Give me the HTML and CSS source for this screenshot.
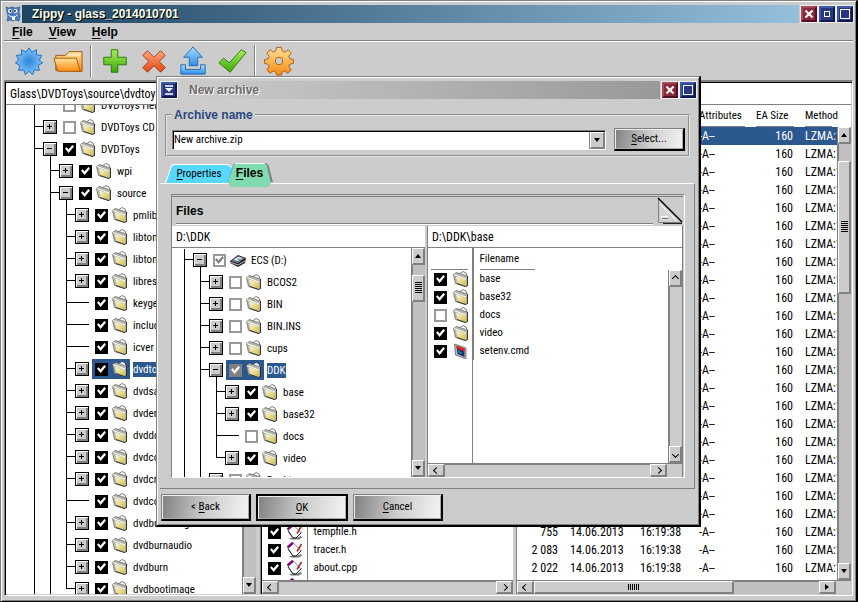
FILE: index.html
```html
<!DOCTYPE html>
<html lang="en">
  <head>
    <meta charset="UTF-8">
    <title>Zippy - glass_2014010701</title>
    <link rel="stylesheet" href="styles.css">
  </head>
  <body>

    <svg class="defs" aria-hidden="true">
      <defs>
        <linearGradient id="g-gold" x1="0" y1="0" x2="1" y2="1">
          <stop offset="0" stop-color="#fdfbe0"/>
          <stop offset="1" stop-color="#d0bc40"/>
        </linearGradient>
        <linearGradient id="g-orange" x1="0" y1="0" x2="0" y2="1">
          <stop offset="0" stop-color="#ffe09a"/>
          <stop offset="1" stop-color="#fb8a10"/>
        </linearGradient>
        <linearGradient id="g-green" x1="0" y1="0" x2="0" y2="1">
          <stop offset="0" stop-color="#a8ee58"/>
          <stop offset="1" stop-color="#3aa808"/>
        </linearGradient>
        <linearGradient id="g-red" x1="0" y1="0" x2="0" y2="1">
          <stop offset="0" stop-color="#ffa878"/>
          <stop offset="1" stop-color="#e64410"/>
        </linearGradient>
        <linearGradient id="g-blue" x1="0" y1="0" x2="0" y2="1">
          <stop offset="0" stop-color="#a8dcff"/>
          <stop offset="1" stop-color="#2f8ee8"/>
        </linearGradient>
        <radialGradient id="g-star">
          <stop offset="0" stop-color="#2f86dc"/>
          <stop offset="1" stop-color="#7cc4fc"/>
        </radialGradient>
      </defs>
      <symbol id="folder" viewBox="0 0 16 16">
        <path d="M5 3.500 8 2l2-1.500L13 2l1 3v3z" fill="#fff" stroke="#444" stroke-width=".7"/>
        <path d="M.5 3.500 3.500 1.500 14.500 5v9.500l-2 1L2.500 12.500z" fill="#b4b4a8" stroke="#666" stroke-width=".7"/>
        <path d="M3 5.500l10 3v6.500L4.500 12z" fill="url(#g-gold)"/>
        <path d="M1 3.500l12 4.500" fill="none" stroke="#fff"/>
        <path d="M14.500 5v9.500l-2 1-8.500-3" fill="none" stroke="#222" stroke-width=".8"/>
      </symbol>
      <symbol id="drive" viewBox="0 0 16 16">
        <path d="M0 9 8 3l8 3-1 5-7 4-8-4z" fill="#24242c"/>
        <path d="M1 9l7-5 7 2-7 5z" fill="#77778c"/>
        <path d="M4 7.500 8 5l4 1-4 3z" fill="#fff"/>
        <path d="M7 6l4 1-3 2z" fill="#3ab6b0"/>
        <path d="M0 10l8 3 7-4" fill="none" stroke="#b8b8c0"/>
      </symbol>
      <symbol id="cmd" viewBox="0 0 16 16">
        <path d="M1.500 1 13 5v11L2.500 12z" fill="#bbb" stroke="#666" stroke-width=".8"/>
        <path d="M3.500 3l8 3v8L4.500 11z" fill="#183078"/>
        <path d="M3.500 2.500 11.500 5.500v3L3.500 5.500z" fill="#e02020"/>
        <path d="M6 7v3M8 9v2" stroke="#20b0a0" fill="none"/>
      </symbol>
      <symbol id="source-file" viewBox="0 0 16 16">
        <path d="M2 14h7l5-2 1 1.500-3 2H4z" fill="#777"/>
        <path d="M1 6 6.500 1 14 9l-5 5H6z" fill="#fff" stroke="#555" stroke-width=".7"/>
        <path d="M.5 5.500 6 .8" stroke="#800080" stroke-width="2.500"/>
        <path d="M10 9.500 14.500 2" stroke="#a02828" stroke-width="1.500"/>
        <path d="M1 7l5 7h3l5.500-5.500" fill="none" stroke="#222"/>
      </symbol>
    </svg>

    <div class="app">
      <header class="titlebar">
        <svg class="app-icon" viewBox="0 0 16 16">
          <path d="M1 1l3 1 3-1 3 1 5-1-1 5 1 4-1 5-4-1-2 1-3-1-3 1 1-5-1-4z" fill="#4c7cc0" stroke="#2a4c88" stroke-width=".6"/>
          <circle cx="5" cy="5" r="2" fill="#fff"/><circle cx="10.500" cy="5" r="2" fill="#fff"/>
          <circle cx="5.500" cy="5" r="1" fill="#123"/><circle cx="10" cy="5" r="1" fill="#123"/>
          <path d="M3.500 9q4.500 4 9 0" fill="none" stroke="#fff"/>
          <path d="M7 11h3v3H7z" fill="#fff"/>
        </svg>
        <h1 class="title">Zippy - glass_2014010701</h1>
        <button class="win-btn close" aria-label="Close"></button>
        <button class="win-btn min" aria-label="Minimize"></button>
        <button class="win-btn max" aria-label="Maximize"></button>
      </header>

      <nav class="menu">
        <button><u>F</u>ile</button>
        <button><u>V</u>iew</button>
        <button><u>H</u>elp</button>
      </nav>

      <div class="toolbar">
        <button aria-label="New">
          <svg viewBox="0 0 32 32"><path d="M16 2l3 4.500 5-2.500 0 5.500 5.500.5-2.500 5 3.500 3-4.500 2.500 1 5.500-5.500-.5-1.500 5-4-3.500-4 3.500-1.500-5-5.500.5 1-5.500-4.500-2.500 3.500-3-2.500-5 5.500-.5 0-5.500 5 2.500z" fill="url(#g-star)" stroke="#1f6ab8"/></svg>
        </button>
        <button aria-label="Open">
          <svg viewBox="0 0 32 32"><path d="M3 26V10h10l4-4h14v21z" fill="url(#g-orange)" stroke="#9c5410"/><path d="M17 8h12v3H15z" fill="#ffe4b0"/><path d="M1 13h24l4 14H5z" fill="url(#g-orange)" stroke="#a85c10"/></svg>
        </button>
        <span class="sep"></span>
        <button aria-label="Add">
          <svg viewBox="0 0 32 32"><path d="M12 4h7v8h9v8h-9v8h-7v-8H4v-8h8z" fill="url(#g-green)" stroke="#28780c" stroke-linejoin="round"/></svg>
        </button>
        <button aria-label="Delete">
          <svg viewBox="0 0 32 32"><path d="M9 5l7 7 7-7 5 5-6.500 6.500L28 23l-5 5-7-7-7 7-5-5 6.500-6.500L4 10z" fill="url(#g-red)" stroke="#a03c18" stroke-linejoin="round"/></svg>
        </button>
        <button aria-label="Extract">
          <svg viewBox="0 0 32 32"><path d="M3 20h5v5h16v-5h5v10H3z" fill="url(#g-blue)" stroke="#2468b0"/><path d="M16 1l10 11h-5v9H12v-9H6z" fill="url(#g-blue)" stroke="#2468b0"/></svg>
        </button>
        <button aria-label="Test">
          <svg viewBox="0 0 32 32"><path d="M2 18l5-5 6 5L26 4l5 3-17 21z" fill="url(#g-green)" stroke="#28780c" stroke-linejoin="round"/></svg>
        </button>
        <span class="sep"></span>
        <button aria-label="Settings">
          <svg viewBox="0 0 32 32"><path d="M13.500 1.500h5l1 4 2.500 1 4-2.500 3 3.500-2.500 3.500 1 2.500 4 1v4l-4 1-1 2.500 2.500 3.500-3.500 3.500-3.500-2.500-2.500 1-1 3.500h-5l-1-3.500-2.500-1-3.500 2.500-3.500-3.500L5.500 22l-1-2.500L.5 18.500v-4l4-1 1-2.500L3 7.500 6.500 4l3.500 2.500 2.500-1zM16 12a4 4 0 1 0 0 8 4 4 0 1 0 0-8z" fill="url(#g-orange)" fill-rule="evenodd" stroke="#a85c10"/></svg>
        </button>
      </div>

      <main class="client">
        <div class="path">Glass\DVDToys\source\dvdtoys</div>
        <div class="panes">
          <section class="pane tree-pane">
            <div class="tree" id="main-tree"></div>
            <div class="sb sb-v"><span class="track"></span><button class="down" aria-label="Down"></button></div>
          </section>
          <section class="pane names-pane">
            <div class="names-body">
              <table class="files names">
                <thead><tr><th class="col-pick"></th><th>Filename</th></tr></thead>
                <tbody id="main-names"></tbody>
              </table>
            </div>
            <div class="sb sb-h"><button class="left off" aria-label="Left"></button><span class="track empty"></span><button class="right off" aria-label="Right"></button></div>
          </section>
          <section class="pane details-pane">
            <div class="details-body">
              <table class="files details">
                <colgroup><col class="w-size"><col class="w-date"><col class="w-time"><col class="w-attr"><col class="w-ea"><col></colgroup>
                <thead>
                  <tr><th><span>Size</span></th><th><span>Date</span></th><th><span>Time</span></th><th><span>Attributes</span></th><th><span>EA Size</span></th><th><span>Method</span></th></tr>
                </thead>
                <tbody id="main-details"></tbody>
              </table>
              <div class="sb sb-v under-header">
                <button class="up" aria-label="Up"></button>
                <span class="track gap"></span>
                <span class="thumb"><i class="grip"></i></span>
                <span class="track"></span>
                <button class="down" aria-label="Down"></button>
              </div>
            </div>
            <div class="sb sb-h">
              <button class="left off" aria-label="Left"></button>
              <span class="thumb"><i class="grip"></i></span>
              <span class="track"></span>
              <button class="right" aria-label="Right"></button>
              <span class="corner"></span>
            </div>
          </section>
        </div>
      </main>
    </div>

    <div class="dialog" role="dialog" aria-label="New archive">
      <header class="titlebar">
        <button class="win-btn menu-btn" aria-label="Window menu"><svg viewBox="0 0 10 10"><path d="M1 1h8M1 9h8" stroke="#fff" stroke-width="1.500"/><path d="M1 3h8L5 7z" fill="#fff"/></svg></button>
        <h2 class="title">New archive</h2>
        <button class="win-btn close" aria-label="Close"></button>
        <button class="win-btn max" aria-label="Maximize"></button>
      </header>

      <fieldset class="group">
        <legend>Archive name</legend>
        <div class="combo">
          <input type="text" value="New archive.zip" aria-label="Archive name">
          <button class="down" aria-label="History"></button>
        </div>
        <button class="push select"><span><u>S</u>elect...</span></button>
      </fieldset>

      <div class="tabs">
        <button class="tab"><span><u>P</u>roperties</span></button>
        <button class="tab active"><span><u>F</u>iles</span></button>
      </div>

      <div class="notebook">
        <div class="page">
          <div class="page-head">
            <h3>Files</h3>
            <svg class="corner-fold" viewBox="0 0 26 28">
              <path d="M0 0h26v28H0z" fill="#ccc"/>
              <path d="M1.500 2v23.500H25" fill="none" stroke="#808080"/>
              <path d="M3 3v21h20z" fill="#d4d4d4"/>
              <path d="M3 7l17 17" stroke="#fff"/>
              <path d="M1 1l24 24" stroke="#000" stroke-width="1.500"/>
              <path d="M5 19.500h6M4.500 21v-2" stroke="#fff"/>
              <path d="M5 21.500h6" stroke="#808080"/>
              <path d="M6 26.500h19" stroke="#222"/>
            </svg>
          </div>
          <div class="split">
            <section class="split-left">
              <div class="path">D:\DDK</div>
              <div class="pane">
                <div class="tree" id="disk-tree"></div>
                <div class="sb sb-v">
                  <button class="up" aria-label="Up"></button>
                  <span class="track gap"></span>
                  <span class="thumb"><i class="grip"></i></span>
                  <span class="track"></span>
                  <button class="down" aria-label="Down"></button>
                </div>
              </div>
            </section>
            <section class="split-right">
              <div class="path">D:\DDK\base</div>
              <div class="split-list">
                <table class="files names">
                  <thead><tr><th class="col-pick"><span></span></th><th><span>Filename</span></th></tr></thead>
                  <tbody id="disk-names"></tbody>
                </table>
                <div class="sb sb-v under-header">
                  <button class="up off" aria-label="Up"></button>
                  <span class="track empty"></span>
                  <button class="down off" aria-label="Down"></button>
                </div>
              </div>
              <div class="sb sb-h">
                <button class="left off" aria-label="Left"></button>
                <span class="track empty"></span>
                <button class="right off" aria-label="Right"></button>
                <span class="corner"></span>
              </div>
            </section>
          </div>
        </div>
      </div>

      <footer class="actions">
        <button class="push"><span>&lt; <u>B</u>ack</span></button>
        <button class="push default"><span><u>O</u>K</span></button>
        <button class="push"><span><u>C</u>ancel</span></button>
      </footer>
    </div>

    <script src="script.js"></script>
  </body>
</html>
```
FILE: styles.css
```css
* {
  box-sizing: border-box;
}

body {
  margin: 0;
  height: 100vh;
  overflow: hidden;
  position: relative;
  background: #ccc;
  color: #000;
  font: 11px/16px "Roboto Condensed", Roboto, "Liberation Sans", sans-serif;
}

button {
  font: inherit;
  color: inherit;
  padding: 0;
  border: 0;
  background: none;
}

h1, h2, h3 {
  margin: 0;
  font: bold 12px/16px "Liberation Sans", sans-serif;
}

u {
  text-underline-offset: 2px;
}

.defs {
  position: absolute;
  width: 0;
  height: 0;
}

/* main window */

.app {
  height: 100%;
  display: flex;
  flex-direction: column;
  padding: 3px 2px 2px;
  border: 1px solid #808080;
  border-right: 2px solid #000;
  border-bottom: 1px solid #000;
  box-shadow: inset 1px 1px #fff, inset -1px -1px #808080;
}

.titlebar {
  display: flex;
  align-items: center;
  gap: 2px;
  height: 18px;
  margin: 1px 1px 0 2px;
}

.titlebar .title {
  flex: 1;
  line-height: 18px;
}

.app-icon {
  width: 16px;
  height: 16px;
}

.app .title {
  padding-left: 10px;
  margin-left: -1px;
  color: #ffffe4;
  text-shadow: 1px 1px #000;
  background: linear-gradient(90deg, #1e4464, #94c0dc);
}

.win-btn {
  position: relative;
  width: 16px;
  height: 16px;
  border: 2px solid #4058a8;
  border-right-color: #101850;
  border-bottom-color: #101850;
  outline: 1px solid #eee;
  background: #283880;
}

.win-btn.close {
  border-color: #a04858 #501020 #501020 #a04858;
  background: #882838;
}

.win-btn.close::before,
.win-btn.close::after {
  content: "";
  position: absolute;
  left: 1px;
  top: 5px;
  width: 10px;
  height: 2px;
  background: #fff;
  transform: rotate(45deg);
}

.win-btn.close::after {
  transform: rotate(-45deg);
}

.win-btn.max::after,
.win-btn.min::after {
  content: "";
  display: block;
  width: 8px;
  height: 8px;
  margin: auto;
  border: 1px solid #fff;
}

.win-btn.min::after {
  width: 4px;
  height: 4px;
}

.win-btn svg {
  display: block;
  width: 10px;
  height: 10px;
  margin: auto;
}

.menu {
  display: flex;
  gap: 16px;
  padding: 1px 8px 0;
  margin: 0 1px;
  height: 19px;
  border-bottom: 1px solid #fff;
  box-shadow: inset 0 -1px #808080;
  font: bold 12px/16px "Liberation Sans", sans-serif;
}

.menu button {
  height: 16px;
}

.toolbar {
  display: flex;
  align-items: center;
  height: 38px;
  padding-left: 6px;
}

.toolbar button {
  width: 39px;
  height: 34px;
}

.toolbar svg {
  display: block;
  width: 30px;
  height: 30px;
  margin: auto;
}

.sep {
  width: 2px;
  height: 32px;
  margin: 0 3px;
  border-left: 1px solid #808080;
  border-right: 1px solid #fff;
}

.client {
  flex: 1;
  min-height: 0;
  display: flex;
  flex-direction: column;
  margin: 0 1px 3px;
  border: 1px solid #808080;
  border-right-color: #fff;
  border-bottom-color: #fff;
  border-top-width: 2px;
  padding: 1px 1px 1px 0;
  box-shadow: inset 1px 1px #000;
}

.path {
  height: 22px;
  padding: 3px 4px 0;
  margin-left: 1px;
  border-bottom: 1px solid #808080;
  background: #fff;
  font-size: 12px;
}

.panes {
  flex: 1;
  min-height: 0;
  display: flex;
  margin-left: 1px;
}

.pane {
  display: flex;
  min-height: 0;
  overflow: hidden;
  background: #fff;
}

.tree-pane {
  width: 250px;
}

.names-pane {
  flex-direction: column;
  width: 252px;
  margin-left: 5px;
  border-left: 1px solid #000;
  box-shadow: -1px 0 #808080;
}

.names-body {
  flex: 1;
  min-height: 0;
  overflow: hidden;
}

.details-pane {
  flex: 1;
  flex-direction: column;
  margin-left: 4px;
  box-shadow: -1px 0 #808080;
}

.details-body {
  flex: 1;
  min-height: 0;
  display: flex;
  overflow: hidden;
}

/* trees */

.tree {
  flex: 1;
  min-width: 0;
  overflow: hidden;
}

#main-tree {
  padding-left: 28px;
}

#main-tree .row:first-child {
  margin-top: -11px;
}

#disk-tree {
  padding: 1px 0 0 12px;
}

.row {
  display: flex;
  align-items: center;
  height: 22px;
  white-space: nowrap;
}

.guide {
  flex: none;
  width: 16px;
  height: 22px;
  border-left: 1px solid #000;
}

.joint {
  flex: none;
  width: 9px;
  height: 22px;
  border-left: 1px solid #000;
  background: linear-gradient(#000, #000) 0 10px / 100% 1px no-repeat;
}

.joint.leaf {
  width: 23px;
}

.joint.last {
  border-left: 0;
  background: linear-gradient(#000, #000) 0 10px / 100% 1px no-repeat, linear-gradient(#000, #000) 0 0 / 1px 11px no-repeat;
}

.expander {
  position: relative;
  flex: none;
  width: 14px;
  height: 14px;
  border: 1px solid #000;
  background: #ccc;
  box-shadow: inset 1px 1px #fff, inset -2px -2px #808080;
}

.expander::before,
.expander.plus::after {
  content: "";
  position: absolute;
  left: 3px;
  top: 5px;
  width: 5px;
  height: 1px;
  background: #000;
}

.expander.plus::after {
  left: 5px;
  top: 3px;
  width: 1px;
  height: 5px;
}

.expander.minus::after {
  content: "";
  position: absolute;
  left: 6px;
  top: 13px;
  width: 1px;
  height: 4px;
  background: #000;
}

.pick {
  display: flex;
  align-items: center;
  margin-left: 3px;
}

.pick .mark {
  display: flex;
  align-items: center;
  gap: 4px;
  height: 20px;
  padding: 0 2px 0 3px;
}

.pick .name {
  margin-left: 3px;
  line-height: 15px;
}

.selected > .pick .mark,
.selected > .pick .name {
  background: #2c5890;
  color: #fff;
}

.pick svg {
  width: 16px;
  height: 16px;
}

input[type=checkbox] {
  appearance: none;
  flex: none;
  width: 13px;
  height: 13px;
  margin: 0;
  border: 2px solid #999;
  background: #fff;
}

input[type=checkbox]:checked {
  border-color: #000;
  background: #000;
}

input[type=checkbox]:checked::after {
  content: "";
  display: block;
  width: 9px;
  height: 9px;
  background: #fff;
  clip-path: polygon(0 45%, 20% 30%, 38% 55%, 82% 5%, 100% 22%, 40% 95%);
}

input.part[type=checkbox]:checked {
  border-color: #808080;
  background: #808080;
}

input.inner[type=checkbox]:checked {
  border-color: #999;
  background: #fff;
}

input.inner[type=checkbox]:checked::after {
  background: #808080;
}

/* file lists */

.files {
  border-collapse: collapse;
  table-layout: fixed;
  width: 100%;
  align-self: flex-start;
}

.files th,
.files td {
  height: 18px;
  padding: 0 0 0 6px;
  font-weight: normal;
  text-align: left;
  white-space: nowrap;
}

.details td {
  font-size: 12px;
}

.files th {
  height: 22px;
  padding-right: 5px;
}

.files th span {
  display: block;
  height: 22px;
  padding-top: 3px;
  border-bottom: 1px solid #808080;
}

.files .selected {
  background: #2c5890;
  color: #fff;
}

.files .num {
  padding-right: 6px;
  text-align: right;
}

.w-size { width: 47px; }
.w-date { width: 70px; }
.w-time { width: 59px; }
.w-attr { width: 57px; }
.w-ea { width: 49px; }

.names .col-pick {
  width: 45px;
  border-right: 1px solid #808080;
}

.names .pick {
  margin: 0;
}

.names .pick .mark {
  gap: 6px;
  height: 18px;
  padding: 0;
}

.split-list .names th {
  padding-left: 3px;
}

.split-list .names th:last-child {
  padding-left: 6px;
}

.split-list .names th:last-child span {
  width: 55px;
}

/* scroll bars */

.sb {
  display: flex;
  flex: none;
}

.sb-v {
  flex-direction: column;
  width: 14px;
  border-left: 1px solid #808080;
}

.sb-h {
  height: 14px;
  border-top: 1px solid #808080;
}

.sb button,
.sb .thumb,
.combo button {
  flex: none;
  display: flex;
  align-items: center;
  justify-content: center;
  background: #ccc;
  border: 1px solid #fff;
  border-right: 2px solid #808080;
  border-bottom: 2px solid #808080;
}

.sb-v button {
  height: 17px;
}

.sb-h button {
  width: 17px;
}

.sb .track {
  flex: 1;
  background: #c0c0c0;
}

.sb .track.empty,
.corner {
  background: #ccc;
}

.sb-v .track {
  border-left: 1px solid #808080;
}

.sb-h .track {
  border-top: 1px solid #808080;
}

.sb .track.gap {
  flex: 0 0 10px;
}

.sb-h .corner {
  width: 15px;
}

.grip {
  width: 7px;
  height: 12px;
  background: repeating-linear-gradient(#000 0 1px, #ccc 1px 2px);
}

.sb-h .grip {
  width: 12px;
  height: 6px;
  background: repeating-linear-gradient(90deg, #000 0 1px, #ccc 1px 2px);
}

/* arrows */
.up::after,
.down::after,
.left::after,
.right::after {
  content: "";
  border: 3px solid transparent;
}

.up::after { border-top-width: 0; border-bottom: 4px solid #000; }
.down::after { border-bottom-width: 0; border-top: 4px solid #000; }
.left::after { border-left-width: 0; border-right: 4px solid #000; }
.right::after { border-right-width: 0; border-left: 4px solid #000; }

.sb .off::after {
  width: 4px;
  height: 4px;
  border: 0 solid #000;
  border-width: 1px 0 0 1px;
}

.up.off::after { transform: rotate(45deg); }
.down.off::after { transform: rotate(225deg); }
.left.off::after { transform: rotate(-45deg); }
.right.off::after { transform: rotate(135deg); }

.under-header {
  margin-top: 22px;
}

.details-pane .sb-v .thumb {
  height: 133px;
}

.details-pane .sb-v .gap {
  flex-basis: 17px;
}

.details-pane .sb-h .thumb {
  width: 200px;
}

/* dialog window */

.dialog {
  position: absolute;
  left: 156px;
  right: 157px;
  top: 76px;
  padding: 4px 3px 4px;
  border: 1px solid #808080;
  border-right: 2px solid #000;
  border-bottom: 2px solid #000;
  background: #ccc;
  box-shadow: inset 1px 1px #fff, inset -1px -1px #808080;
}

.dialog > .titlebar {
  margin: 0 0 0 1px;
}

.dialog .title {
  align-self: stretch;
  padding-left: 10px;
  color: #6c6c6c;
  text-shadow: 1px 1px #fff;
  background: linear-gradient(90deg, #ccc, #999);
}

.group {
  display: flex;
  align-items: center;
  gap: 8px;
  min-width: 0;
  margin: 8px 6px 0 5px;
  padding: 5px 3px 4px 5px;
  border: 2px groove #e4e4e4;
}

.group legend {
  padding: 0 2px;
  color: #2c4880;
  font: bold 12px/16px "Liberation Sans", sans-serif;
}

.combo {
  flex: 1;
  display: flex;
  height: 20px;
  border: 1px solid #808080;
  border-right-color: #fff;
  border-bottom-color: #fff;
  box-shadow: inset 1px 1px #000;
  background: #fff;
  padding: 1px 0 0 1px;
}

.combo input {
  flex: 1;
  min-width: 0;
  padding: 0;
  border: 0;
  background: none;
  font: inherit;
}

.combo button {
  width: 15px;
  box-shadow: -1px 0 #808080;
}

.push {
  width: 90px;
  height: 27px;
  border: 1px solid #808080;
  border-right: 2px solid #000;
  border-bottom: 2px solid #000;
  box-shadow: inset 1px 1px #eee, inset -1px -1px #aaa;
  background: linear-gradient(100deg, #808080, #ccc 50%, #f4f4f4);
}

.push.select {
  width: 71px;
  height: 23px;
}

.push.default {
  width: 92px;
  border: 2px solid #000;
}

.tabs {
  display: flex;
  position: relative;
  margin: 6px 5px 0;
  height: 20px;
}

.tab {
  width: 67px;
  height: 19px;
  margin-top: 1px;
  background: #fff;
  clip-path: polygon(0 100%, 9% 8%, 12% 0, 93% 0, 100% 15%, 100% 100%);
}

.tab span {
  display: block;
  margin: 1px 0 0 1px;
  line-height: 18px;
  background: #58d8fc;
  clip-path: polygon(0 100%, 9% 8%, 12% 0, 93% 0, 100% 15%, 100% 100%);
}

.tab.active {
  width: 45px;
  height: 24px;
  margin: 0 0 0 -4px;
  background: #808080;
  font: bold 12px/20px "Liberation Sans", sans-serif;
  clip-path: polygon(0 80%, 12% 4%, 16% 0, 84% 0, 90% 8%, 100% 80%, 96% 80%, 88% 100%, 9% 100%);
}

.tab.active span {
  height: 24px;
  margin: 0 2px 0 0;
  line-height: 21px;
  background: #80dcb0;
  box-shadow: inset 0 1px #fff;
  clip-path: polygon(0 80%, 14% 4%, 18% 0, 84% 0, 90% 8%, 100% 85%, 92% 100%, 9% 100%);
}

.notebook {
  padding: 10px 9px 10px 11px;
  margin-right: 1px;
  border-top: 1px solid #fff;
  border-right: 1px solid #808080;
  border-bottom: 1px solid #808080;
}

.page {
  border: 1px solid #808080;
  border-right-color: #fff;
  border-bottom-color: #fff;
  padding: 1px 1px 0 0;
}

.page-head {
  display: flex;
  height: 30px;
  border-top: 1px solid #808080;
}

.page-head h3 {
  flex: 1;
  height: 28px;
  margin: 0 4px;
  padding: 6px 0 0;
  border-bottom: 1px solid #fff;
  box-shadow: inset 0 -1px #808080;
}

.corner-fold {
  width: 26px;
  height: 28px;
}

.split {
  display: flex;
  height: 251px;
}

.split section {
  display: flex;
  flex-direction: column;
  background: #fff;
}

.split .path {
  margin: 0;
}

.split-left {
  width: 253px;
  margin-right: 2px;
}

.split-left .pane {
  flex: 1;
}

.split-right {
  flex: 1;
  min-width: 0;
  border-left: 1px solid #808080;
  border-right: 1px solid #808080;
}

.split-list {
  flex: 1;
  min-height: 0;
  display: flex;
  background: linear-gradient(#808080, #808080) 44px 0 / 1px 100% no-repeat;
}

.split-list .files {
  width: auto;
  flex: 1;
}

.split-left .thumb {
  height: 27px;
}

.actions {
  display: flex;
  align-items: center;
  gap: 5px;
  margin: 5px 0 0 1px;
}
```
FILE: script.js
```
var SVG_OPEN = '<svg><use href="#';

// [depth, expander, checkbox, icon, name, flags]
// expander: '+', '-', or '' for a leaf
var mainTree = [
  [0, '', 'off', 'folder', 'DVDToys Help'],
  [0, '+', 'off', 'folder', 'DVDToys CD'],
  [0, '-', 'on', 'folder', 'DVDToys'],
  [1, '+', 'on', 'folder', 'wpi'],
  [1, '-', 'on', 'folder', 'source'],
  [2, '+', 'on', 'folder', 'pmlib'],
  [2, '+', 'on', 'folder', 'libtomcrypt'],
  [2, '+', 'on', 'folder', 'libtommath'],
  [2, '+', 'on', 'folder', 'libres'],
  [2, '', 'on', 'folder', 'keygen'],
  [2, '', 'on', 'folder', 'include'],
  [2, '', 'on', 'folder', 'icver'],
  [2, '+', 'on', 'folder', 'dvdtoys', 'selected'],
  [2, '+', 'on', 'folder', 'dvdsave'],
  [2, '+', 'on', 'folder', 'dvderase'],
  [2, '+', 'on', 'folder', 'dvddc'],
  [2, '+', 'on', 'folder', 'dvdcopy'],
  [2, '+', 'on', 'folder', 'dvdcreate'],
  [2, '', 'on', 'folder', 'dvdcommon'],
  [2, '+', 'on', 'folder', 'dvdburnimage'],
  [2, '+', 'on', 'folder', 'dvdburnaudio'],
  [2, '+', 'on', 'folder', 'dvdburn'],
  [2, '+', 'on', 'folder', 'dvdbootimage', 'last']
];

var diskTree = [
  [0, '-', 'inner', 'drive', 'ECS (D:)'],
  [1, '+', 'off', 'folder', 'BCOS2'],
  [1, '+', 'off', 'folder', 'BIN'],
  [1, '+', 'off', 'folder', 'BIN.INS'],
  [1, '+', 'off', 'folder', 'cups'],
  [1, '-', 'part', 'folder', 'DDK', 'selected'],
  [2, '+', 'on', 'folder', 'base'],
  [2, '+', 'on', 'folder', 'base32'],
  [2, '', 'off', 'folder', 'docs'],
  [2, '+', 'on', 'folder', 'video', 'last'],
  [1, '+', 'off', 'folder', 'Desktop']
];

var diskFiles = [
  ['on', 'folder', 'base'],
  ['on', 'folder', 'base32'],
  ['off', 'folder', 'docs'],
  ['on', 'folder', 'video'],
  ['on', 'cmd', 'setenv.cmd']
];

// last files of the archive folder, the ones above share the same attributes
var tail = [
  ['tempfile.h', '755'],
  ['tracer.h', '2 083'],
  ['about.cpp', '2 022'],
  ['burndlg.cpp', '']
];

function mark(state, icon, name) {
  return '<span class="mark"><input type="checkbox" class="' + state + '" aria-label="' + name + '"' +
    (state == 'off' ? '' : ' checked') + '>' + SVG_OPEN + icon + '"/></svg></span>';
}

function drawTree(id, rows) {
  var html = '';
  rows.forEach(function (r) {
    var flags = r[5] || '';
    html += '<div class="row ' + (flags == 'selected' ? flags : '') + '">';
    for (var i = 0; i < r[0]; i++) {
      html += '<span class="guide"></span>';
    }
    html += '<span class="joint ' + (r[1] ? '' : 'leaf ') + (flags == 'last' ? flags : '') + '"></span>';
    if (r[1]) {
      html += '<button class="expander ' + (r[1] == '+' ? 'plus' : 'minus') + '" aria-label="Toggle ' + r[4] + '"></button>';
    }
    html += '<label class="pick">' + mark(r[2], r[3], r[4]) + '<span class="name">' + r[4] + '</span></label></div>';
  });
  document.getElementById(id).innerHTML = html;
}

function nameRow(state, icon, name) {
  return '<tr><td class="col-pick"><label class="pick">' + mark(state, icon, name) + '</label></td><td>' + name + '</td></tr>';
}

drawTree('main-tree', mainTree);
drawTree('disk-tree', diskTree);

document.getElementById('disk-names').innerHTML = diskFiles.map(function (f) {
  return nameRow(f[0], f[1], f[2]);
}).join('');

var names = '';
var details = '';
for (var i = 0; i < 26; i++) {
  var file = tail[i - 22] || ['', ''];
  names += nameRow('on', 'source-file', file[0]);
  if (i < 25) {
    details += '<tr' + (i == 0 ? ' class="selected"' : '') + '><td class="num">' + file[1] + '</td>' +
      '<td>14.06.2013</td><td>16:19:38</td><td>-A--</td><td class="num">160</td><td>LZMA:16</td></tr>';
  }
}
document.getElementById('main-names').innerHTML = names;
document.getElementById('main-details').innerHTML = details;
```
